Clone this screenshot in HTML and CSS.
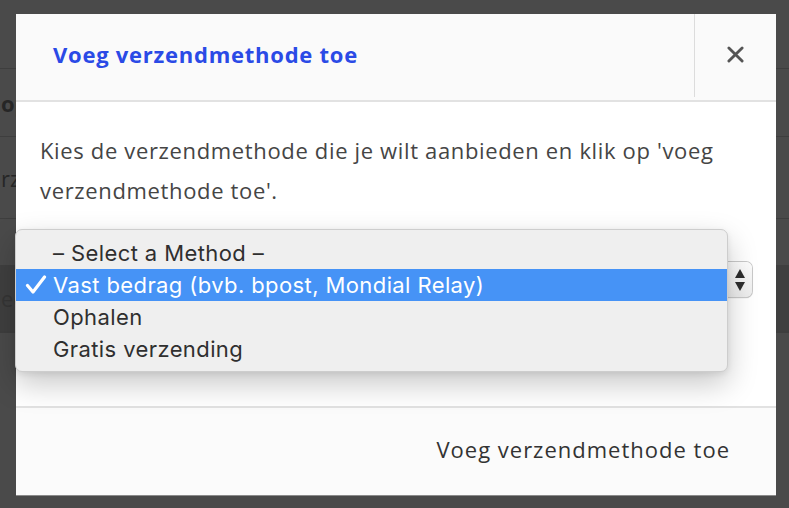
FILE: index.html
```html
<!DOCTYPE html>
<html lang="nl">
<head>
<meta charset="utf-8">
<title>Voeg verzendmethode toe</title>
<link rel="stylesheet" href="styles.css">
</head>
<body>
<div class="page">
  <div class="row r1"></div>
  <div class="row r2"><span class="ghost bold">op</span></div>
  <div class="row r3"><span class="ghost">rz</span></div>
  <div class="row r4"></div>
  <div class="row r5"><span class="ghost">ec</span></div>
  <div class="row r6"></div>
</div>
<div class="overlay">
  <div class="modal">
    <div class="modal-header">
      <h2 class="modal-title">Voeg verzendmethode toe</h2>
      <button class="close" type="button" aria-label="Sluiten">
        <svg width="18" height="18" viewBox="0 0 18 18"><path d="M2 2 L16 16 M16 2 L2 16" stroke="#555" stroke-width="3" stroke-linecap="round" fill="none"/></svg>
      </button>
    </div>
    <div class="modal-body">
      <p class="intro">Kies de verzendmethode die je wilt aanbieden en klik op 'voeg verzendmethode toe'.</p>
      <div class="select">
        <div class="stepper">
          <span class="tri up"></span>
          <span class="tri down"></span>
        </div>
        <ul class="menu">
          <li class="opt">– Select a Method –</li>
          <li class="opt selected"><svg class="check" width="22" height="20" viewBox="0 0 22 20"><path d="M2.5 10.5 L8 17 L19.5 2" stroke="#fff" stroke-width="3.2" stroke-linecap="round" stroke-linejoin="round" fill="none"/></svg>Vast bedrag (bvb. bpost, Mondial Relay)</li>
          <li class="opt">Ophalen</li>
          <li class="opt">Gratis verzending</li>
        </ul>
      </div>
    </div>
    <div class="modal-footer">
      <span class="footer-action">Voeg verzendmethode toe</span>
    </div>
  </div>
</div>
</body>
</html>
```
FILE: styles.css
```css
html, body {
  margin: 0;
  padding: 0;
}
body {
  width: 789px;
  height: 508px;
  overflow: hidden;
  background: #4a4a4a;
  position: relative;
  font-family: "Open Sans", "Liberation Sans", sans-serif;
}
.page {
  display: flex;
  flex-direction: column;
}
.row {
  border-bottom: 1px solid #3e3e3e;
  display: flex;
  align-items: center;
  overflow: hidden;
}
.r1 { height: 68px; }
.r2 { height: 67px; }
.r3 { height: 81px; }
.r4 { height: 46px; border-bottom: none; }
.r5 { height: 66px; background: #3f3f3f; }
.r6 { flex: 1; }
.ghost {
  font-size: 22px;
  color: #262626;
  margin-left: 1px;
}
.ghost.bold { font-weight: 700; }
.r5 .ghost { color: #353535; }

.overlay {
  position: absolute;
  inset: 0;
  padding: 14px 13px 12px 16px;
}
.modal {
  width: 760px;
  height: 482px;
  background: #fff;
  display: flex;
  flex-direction: column;
  border-bottom: 1px solid #8a8a8a;
  box-sizing: border-box;
}
.modal-header {
  height: 88px;
  background: #fafafa;
  border-bottom: 2px solid #e2e2e2;
  display: flex;
  align-items: flex-start;
  box-sizing: border-box;
}
.modal-title {
  flex: 1;
  margin: 0;
  padding: 0 0 4px 37px;
  height: 83px;
  box-sizing: border-box;
  display: flex;
  align-items: center;
  font-size: 22px;
  font-weight: 700;
  color: #2a4ae6;
  letter-spacing: 0.75px;
}
.close {
  width: 82px;
  height: 83px;
  border: none;
  border-left: 1px solid #dcdcdc;
  background: transparent;
  display: flex;
  align-items: center;
  justify-content: center;
  padding: 0 0 2px 0;
  margin: 0;
}
.close svg { width: 17px; height: 17px; }

.modal-body {
  flex: 1;
  padding: 28px 24px 0 24px;
  background: #fff;
}
.intro {
  margin: 0;
  font-size: 22px;
  line-height: 40px;
  letter-spacing: 0.65px;
  color: #454545;
}
.select {
  position: relative;
  margin-top: 52px;
  height: 35px;
  border-radius: 6px;
  background: linear-gradient(#fdfdfd, #ececec);
  box-shadow: 0 0 0 1px #c9c9c9, 0 1px 1px rgba(0,0,0,0.35);
  display: flex;
  justify-content: flex-end;
  align-items: center;
}
.stepper {
  width: 24px;
  display: flex;
  flex-direction: column;
  align-items: center;
  gap: 4px;
}
.tri {
  width: 0;
  height: 0;
  border-left: 5px solid transparent;
  border-right: 5px solid transparent;
}
.tri.up { border-bottom: 9px solid #2e2e2e; }
.tri.down { border-top: 9px solid #2e2e2e; }

.menu {
  position: absolute;
  left: -25px;
  top: -33px;
  width: 713px;
  height: 143px;
  box-sizing: border-box;
  margin: 0;
  padding: 7px 0 0 0;
  list-style: none;
  background: #efefef;
  border: 1px solid #cdcdcd;
  border-radius: 7px;
  box-shadow: 0 12px 30px rgba(0,0,0,0.22), 0 2px 6px rgba(0,0,0,0.08);
}
.opt {
  height: 32px;
  display: flex;
  align-items: center;
  padding-left: 37px;
  position: relative;
  font-family: Inter, "Liberation Sans", sans-serif;
  font-size: 22px;
  color: #2f2f2f;
  letter-spacing: 0.4px;
}
.opt.selected {
  background: #4693f6;
  color: #fff;
}
.check {
  position: absolute;
  left: 9px;
  top: 6px;
}

.modal-footer {
  height: 89px;
  border-top: 2px solid #e2e2e2;
  background: #fbfbfb;
  display: flex;
  align-items: center;
  justify-content: flex-end;
  padding: 0 46px 5px 0;
  box-sizing: border-box;
}
.footer-action {
  font-size: 22px;
  letter-spacing: 1px;
  color: #333;
}
```
